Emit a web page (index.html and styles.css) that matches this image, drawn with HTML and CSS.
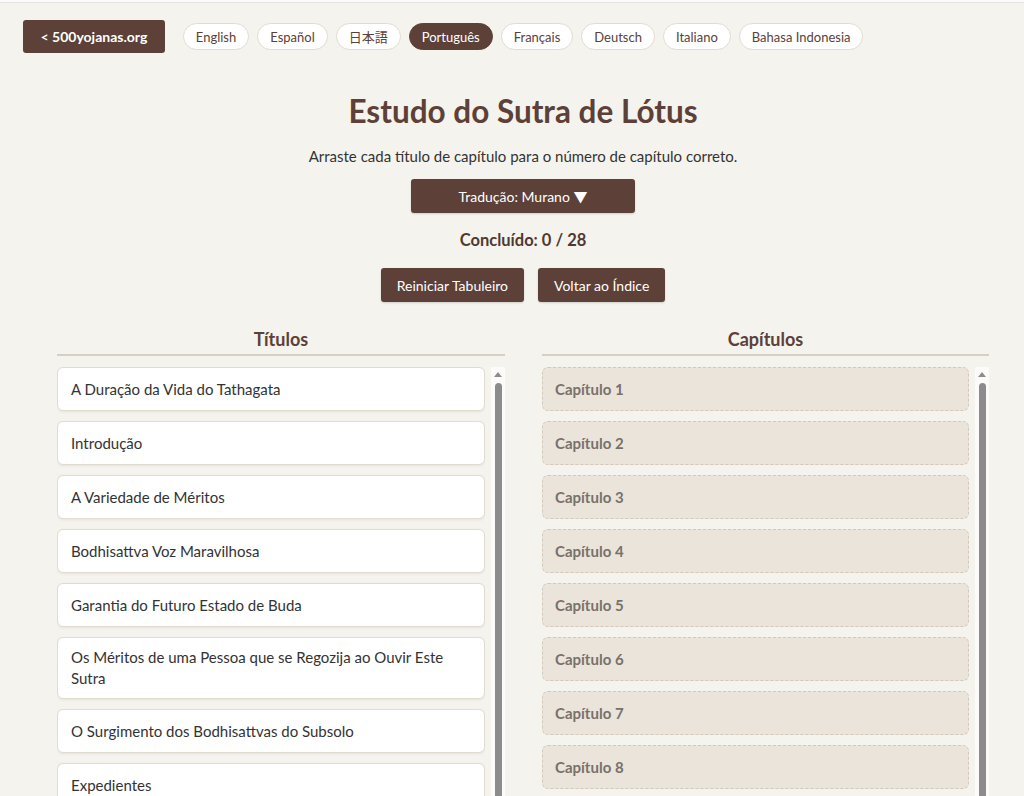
FILE: index.html
```html
<!DOCTYPE html>
<html lang="pt">
<head>
<meta charset="utf-8">
<title>Estudo do Sutra de Lótus</title>
<link rel="stylesheet" href="styles.css">
</head>
<body>
<div class="topbar">
  <a class="back-btn" href="#">&lt; 500yojanas.org</a>
  <nav class="langs">
    <a class="pill" href="#">English</a>
    <a class="pill" href="#">Español</a>
    <a class="pill" href="#">日本語</a>
    <a class="pill active" href="#">Português</a>
    <a class="pill" href="#">Français</a>
    <a class="pill" href="#">Deutsch</a>
    <a class="pill" href="#">Italiano</a>
    <a class="pill" href="#">Bahasa Indonesia</a>
  </nav>
</div>

<main class="main">
  <h1 class="title">Estudo do Sutra de Lótus</h1>
  <p class="subtitle">Arraste cada título de capítulo para o número de capítulo correto.</p>
  <button class="btn trans-btn">Tradução: Murano ▼</button>
  <p class="progress">Concluído: 0 / 28</p>
  <div class="actions">
    <button class="btn">Reiniciar Tabuleiro</button>
    <button class="btn">Voltar ao Índice</button>
  </div>

  <div class="board">
    <section class="column">
      <h2 class="col-head">Títulos</h2>
      <div class="col-body">
        <div class="list">
          <div class="card">A Duração da Vida do Tathagata</div>
          <div class="card">Introdução</div>
          <div class="card">A Variedade de Méritos</div>
          <div class="card">Bodhisattva Voz Maravilhosa</div>
          <div class="card">Garantia do Futuro Estado de Buda</div>
          <div class="card">Os Méritos de uma Pessoa que se Regozija ao Ouvir Este Sutra</div>
          <div class="card">O Surgimento dos Bodhisattvas do Subsolo</div>
          <div class="card">Expedientes</div>
        </div>
        <div class="scrollbar"><span class="arrow"></span><span class="thumb"></span></div>
      </div>
    </section>
    <section class="column">
      <h2 class="col-head">Capítulos</h2>
      <div class="col-body">
        <div class="list">
          <div class="slot">Capítulo 1</div>
          <div class="slot">Capítulo 2</div>
          <div class="slot">Capítulo 3</div>
          <div class="slot">Capítulo 4</div>
          <div class="slot">Capítulo 5</div>
          <div class="slot">Capítulo 6</div>
          <div class="slot">Capítulo 7</div>
          <div class="slot">Capítulo 8</div>
        </div>
        <div class="scrollbar"><span class="arrow"></span><span class="thumb"></span></div>
      </div>
    </section>
  </div>
</main>
</body>
</html>
```

FILE: styles.css
```css
html {
  background: #fbfbfb;
  overflow: hidden;
}
body {
  margin: 2px 0 0 0;
  border-top: 1px solid #e7e5e1;
  background: #f5f3ee;
  font-family: Lato, "Noto Sans", "Noto Sans CJK JP", sans-serif;
  color: #333;
  height: 793px;
  overflow: hidden;
}
.topbar {
  display: flex;
  align-items: center;
  padding: 17px 23px 0 23px;
}
.back-btn {
  display: inline-flex;
  align-items: center;
  height: 33px;
  padding: 0 17.5px;
  background: #5d4037;
  color: #fff;
  font-weight: 700;
  font-size: 14px;
  text-decoration: none;
  border-radius: 3px;
  box-sizing: border-box;
}
.langs {
  display: flex;
  gap: 8px;
  margin-left: 18px;
}
.pill {
  display: inline-flex;
  align-items: center;
  height: 27px;
  padding: 0 12px;
  box-sizing: border-box;
  border: 1px solid #e2dbd0;
  border-radius: 14px;
  background: #fff;
  color: #5d4037;
  font-size: 13px;
  text-decoration: none;
}
.pill.active {
  background: #5d4037;
  border-color: #5d4037;
  color: #fff;
}
.main {
  margin-left: 57px;
  width: 932px;
  display: flex;
  flex-direction: column;
  align-items: center;
}
.title {
  margin: 40px 0 0;
  font-size: 31.5px;
  line-height: 36px;
  font-weight: 700;
  color: #5d4037;
}
.subtitle {
  margin: 17px 0 0;
  font-size: 15px;
  line-height: 20px;
  color: #333;
}
.btn {
  height: 34px;
  padding: 0 16px;
  border: none;
  border-radius: 3px;
  background: #5d4037;
  color: #fff;
  font-family: inherit;
  font-size: 14px;
  box-shadow: 0 1px 2px rgba(0,0,0,0.15);
}
.trans-btn {
  margin-top: 13px;
  width: 224px;
}
.progress {
  margin: 17px 0 0;
  font-size: 16.5px;
  line-height: 20px;
  font-weight: 700;
  color: #4e3a30;
}
.actions {
  margin-top: 18px;
  display: flex;
  gap: 14px;
}
.board {
  align-self: stretch;
  margin-top: 25px;
  display: grid;
  grid-template-columns: 448px 447px;
  column-gap: 37px;
}
.col-head {
  margin: 0;
  padding-bottom: 3px;
  border-bottom: 2px solid #d8cfc3;
  text-align: center;
  font-size: 18px;
  line-height: 24px;
  font-weight: 700;
  color: #5d4037;
}
.col-body {
  margin-top: 11px;
  display: flex;
  gap: 6px;
  height: 460px;
}
.list {
  flex: 1;
  display: flex;
  flex-direction: column;
  gap: 10px;
  overflow: hidden;
}
.card {
  flex-shrink: 0;
  display: flex;
  align-items: center;
  min-height: 44px;
  box-sizing: border-box;
  padding: 9px 13px;
  background: #fff;
  border: 1px solid #e2dbd0;
  border-radius: 6px;
  box-shadow: 0 1px 3px rgba(0,0,0,0.07);
  font-size: 15px;
  line-height: 21px;
  color: #333;
}
.slot {
  flex-shrink: 0;
  display: flex;
  align-items: center;
  height: 44px;
  box-sizing: border-box;
  padding: 0 12px;
  background: #ebe4da;
  border: 1px dashed #d3c8ba;
  border-radius: 6px;
  font-size: 15px;
  font-weight: 700;
  color: #77716e;
}
.scrollbar {
  width: 14px;
  flex-shrink: 0;
  background: #fcfbf9;
  display: flex;
  flex-direction: column;
  align-items: center;
}
.arrow {
  margin-top: 5px;
  width: 0;
  height: 0;
  border-left: 4px solid transparent;
  border-right: 4px solid transparent;
  border-bottom: 5px solid #8c8c8c;
}
.thumb {
  margin-top: 6px;
  width: 7px;
  height: 520px;
  border-radius: 4px;
  background: #8c8c8c;
}
```
